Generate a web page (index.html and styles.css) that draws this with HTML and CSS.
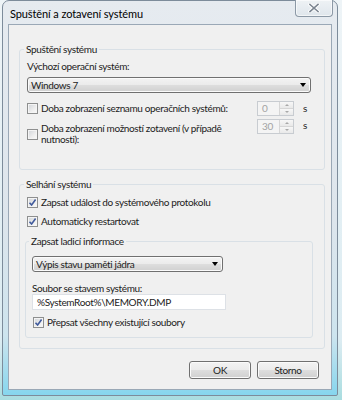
FILE: index.html
```html
<!DOCTYPE html>
<html lang="cs">

<head>
    <meta charset="UTF-8">
    <meta name="viewport" content="width=device-width, initial-scale=1.0">
    <title>Spuštění a zotavení systému</title>
    <link rel="stylesheet" href="styles.css">
</head>

<body>
    <div id="window">
        <div id="title-bar">
            <span id="title-text">Spuštění a zotavení systému</span>
            <div id="close-button">
                <svg width="12" height="10" viewBox="0 0 12 10">
                    <path d="M2 1.5 L10 8.5 M10 1.5 L2 8.5" stroke="#ffffff" stroke-width="3.2" stroke-linecap="square" />
                    <path d="M2 1.5 L10 8.5 M10 1.5 L2 8.5" stroke="#7b8591" stroke-width="1.6" stroke-linecap="square" />
                </svg>
            </div>
        </div>

        <div id="client">
            <fieldset class="group" id="startup-group">
                <legend>Spuštění systému</legend>
                <div class="field-label">Výchozí operační systém:</div>
                <div class="combo" id="os-combo">
                    <span>Windows 7</span>
                    <span class="combo-arrow"></span>
                </div>

                <div class="option-row" id="list-row">
                    <label class="check">
                        <span class="box"></span>
                        <span>Doba zobrazení seznamu operačních systémů:</span>
                    </label>
                    <div class="spin">
                        <span class="spin-value">0</span>
                        <span class="spin-buttons"><span class="spin-up"></span><span class="spin-down"></span></span>
                    </div>
                    <span class="unit">s</span>
                </div>

                <div class="option-row" id="recovery-row">
                    <label class="check">
                        <span class="box"></span>
                        <span class="wrap-text">Doba zobrazení možností zotavení (v případě nutnosti):</span>
                    </label>
                    <div class="spin">
                        <span class="spin-value">30</span>
                        <span class="spin-buttons"><span class="spin-up"></span><span class="spin-down"></span></span>
                    </div>
                    <span class="unit">s</span>
                </div>
            </fieldset>

            <fieldset class="group" id="failure-group">
                <legend>Selhání systému</legend>
                <label class="check single">
                    <span class="box checked"></span>
                    <span>Zapsat událost do systémového protokolu</span>
                </label>
                <label class="check single">
                    <span class="box checked"></span>
                    <span>Automaticky restartovat</span>
                </label>

                <fieldset class="group" id="debug-group">
                    <legend>Zapsat ladicí informace</legend>
                    <div class="combo" id="dump-combo">
                        <span>Výpis stavu paměti jádra</span>
                        <span class="combo-arrow"></span>
                    </div>
                    <div class="field-label" id="file-label">Soubor se stavem systému:</div>
                    <div class="text-box">%SystemRoot%\MEMORY.DMP</div>
                    <label class="check single" id="overwrite-check">
                        <span class="box checked"></span>
                        <span>Přepsat všechny existující soubory</span>
                    </label>
                </fieldset>
            </fieldset>

            <div id="dialog-buttons">
                <button class="push-button">OK</button>
                <button class="push-button">Storno</button>
            </div>
        </div>
    </div>
</body>

</html>
```

FILE: styles.css
```css
body,
html {
    width: 342px;
    height: 400px;
    margin: 0;
    overflow: hidden;
    background: linear-gradient(to bottom, #eef4f7 0%, #dcecf2 85%, #a9dde0 100%);
    font-family: Lato, "Noto Sans", sans-serif;
    font-size: 10px;
    letter-spacing: -0.35px;
    color: #222222;
}

#window {
    box-sizing: border-box;
    width: 336px;
    height: 396px;
    margin-left: 2px;
    padding: 0 5px 5px 5px;
    display: flex;
    flex-direction: column;
    border: 1px solid #7d8c9b;
    border-radius: 7px 7px 2px 2px;
    background: linear-gradient(to bottom, #e6ebf0 0%, #dde5ec 55%, #cde4ee 85%, #86d6ee 100%);
}

#title-bar {
    height: 23px;
    display: flex;
    align-items: center;
    padding-left: 2px;
}

#title-text {
    margin-top: 2px;
    font-size: 11px;
    letter-spacing: -0.1px;
    color: #000000;
}

#close-button {
    align-self: flex-start;
    margin: -1px -1px 0 auto;
    width: 38px;
    height: 17px;
    box-sizing: border-box;
    display: flex;
    align-items: center;
    justify-content: center;
    border: 1px solid #8c99a6;
    border-top: none;
    border-radius: 0 0 4px 4px;
    background: linear-gradient(to bottom, #eef2f5, #dfe6ec);
    box-shadow: inset 0 0 0 1px rgba(255, 255, 255, 0.6);
}

#client {
    box-sizing: border-box;
    height: 366px;
    padding-top: 18px;
    border: 1px solid #9aa8b6;
    background: #f0f0f0;
}

/* group boxes */

.group {
    box-sizing: border-box;
    margin: 0 6px 0 10px;
    min-width: 0;
    border: 1px solid #d9e0e6;
    border-radius: 3px;
}

.group legend {
    margin-left: -3px;
    padding: 0 2px;
    line-height: 12px;
}

#startup-group {
    padding: 5px 13px 24px 7px;
}

#failure-group {
    margin-top: 8px;
    padding: 0 11px 10px 7px;
}

#debug-group {
    margin: 7px 0 0 -2px;
    padding: 0 6px 8px 6px;
}

.field-label {
    line-height: 12px;
}

/* combo boxes */

.combo {
    box-sizing: border-box;
    height: 16px;
    display: flex;
    align-items: center;
    justify-content: space-between;
    padding: 0 4px 0 3px;
    border: 1px solid #707070;
    border-radius: 3px;
    background: linear-gradient(to bottom, #f3f3f3 0%, #ebebeb 50%, #dedede 50%, #d0d0d0 100%);
    box-shadow: inset 0 0 0 1px #fbfbfb;
}

#os-combo {
    margin-top: 5px;
}

#dump-combo {
    margin-top: 9px;
    width: 191px;
}

.combo-arrow {
    width: 0;
    height: 0;
    border-left: 3.5px solid transparent;
    border-right: 3.5px solid transparent;
    border-top: 4px solid #000000;
}

/* check boxes */

.check {
    display: flex;
    align-items: center;
    gap: 3px;
    line-height: 11px;
}

.check.single {
    height: 13px;
    margin-top: 6px;
}

#overwrite-check {
    margin-left: 1px;
}

.box {
    flex: none;
    box-sizing: border-box;
    width: 11px;
    height: 11px;
    border: 1px solid #8e8f8f;
    background: linear-gradient(135deg, #cfd3d8 0%, #eeeeee 60%, #fafafa 100%);
    box-shadow: inset 0 0 0 1px #f4f4f4;
}

.box.checked {
    background:
        url("data:image/svg+xml,%3Csvg xmlns='http://www.w3.org/2000/svg' width='9' height='9'%3E%3Cpath d='M1.5 4.8 L3.6 7 L7.6 1.6' fill='none' stroke='%23405a9c' stroke-width='1.6'/%3E%3C/svg%3E") center / 9px 9px no-repeat,
        linear-gradient(135deg, #cfd3d8 0%, #eeeeee 60%, #fafafa 100%);
}

.option-row {
    display: flex;
    align-items: center;
}

.option-row .check {
    flex: 1;
}

#list-row {
    margin-top: 8px;
    height: 15px;
}

#recovery-row {
    margin-top: 3px;
    align-items: flex-start;
}

#recovery-row .check {
    margin-top: 4px;
}

.wrap-text {
    width: 205px;
}

/* spin boxes (disabled) */

.spin {
    box-sizing: border-box;
    width: 37px;
    height: 15px;
    display: flex;
    border: 1px solid #c8ccd1;
    background: #f4f4f4;
}

.spin-value {
    flex: 1;
    padding-left: 4px;
    line-height: 13px;
    color: #a3a3a3;
}

.spin-buttons {
    width: 13px;
    display: flex;
    flex-direction: column;
    border-left: 1px solid #d6d6d6;
}

.spin-up,
.spin-down {
    flex: 1;
    display: flex;
    align-items: center;
    justify-content: center;
    background: linear-gradient(to bottom, #f7f7f7, #e9e9e9);
}

.spin-up {
    border-bottom: 1px solid #d6d6d6;
}

.spin-up::after,
.spin-down::after {
    content: "";
    border-left: 2px solid transparent;
    border-right: 2px solid transparent;
}

.spin-up::after {
    border-bottom: 2px solid #a8a8a8;
}

.spin-down::after {
    border-top: 2px solid #a8a8a8;
}

.unit {
    width: 8px;
    margin-left: 9px;
    line-height: 13px;
}

/* text box */

#file-label {
    margin-top: 10px;
}

.text-box {
    box-sizing: border-box;
    width: 194px;
    height: 16px;
    padding-left: 4px;
    line-height: 14px;
    border: 1px solid #dde1e6;
    background: #ffffff;
}

/* push buttons */

#dialog-buttons {
    display: flex;
    justify-content: flex-end;
    gap: 6px;
    margin: 12px 12px 0 0;
}

.push-button {
    box-sizing: border-box;
    width: 62px;
    height: 18px;
    padding: 0;
    border: 1px solid #707070;
    border-radius: 3px;
    background: linear-gradient(to bottom, #f3f3f3 0%, #ebebeb 50%, #dedede 50%, #d0d0d0 100%);
    box-shadow: inset 0 0 0 1px #fbfbfb;
    font-family: Lato, "Noto Sans", sans-serif;
    font-size: 10px;
    letter-spacing: -0.35px;
    color: #222222;
}
```
